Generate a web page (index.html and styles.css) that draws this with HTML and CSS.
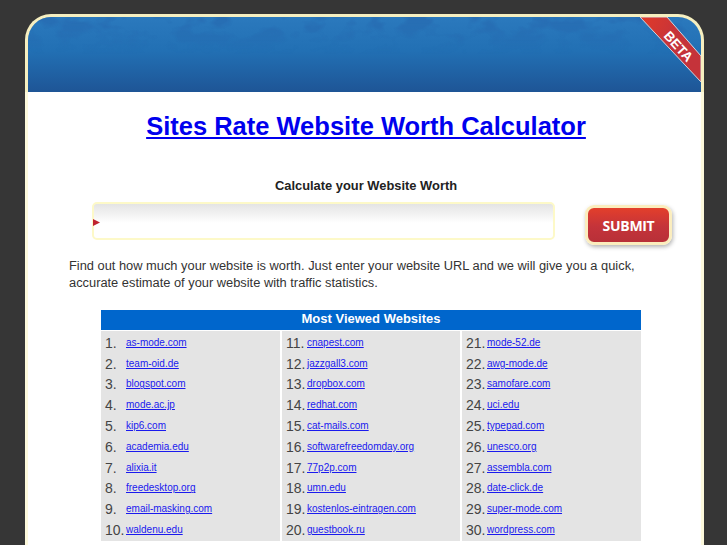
FILE: index.html

```html
<!DOCTYPE html>
<html lang="en">
<head>
    <meta charset="UTF-8">
    <title>Sites Rate Website Worth Calculator</title>
    <link rel="stylesheet" href="styles.css">
</head>
<body>
    <div class="container">
        <!-- Header -->
        <div class="header">
            <svg class="header-grain" width="673" height="75">
                <defs>
                    <filter id="grain" x="0" y="0" width="100%" height="100%" color-interpolation-filters="sRGB">
                        <feTurbulence type="fractalNoise" baseFrequency="0.035 0.06" numOctaves="3" seed="7"/>
                        <feColorMatrix type="matrix" values="0 0 0 0 0.15  0 0 0 0 0.40  0 0 0 0 0.68  0 0 0 5 -2.3"/>
                    </filter>
                    <linearGradient id="grain-fade" x1="0" y1="0" x2="0" y2="1">
                        <stop offset="0" stop-color="#fff"/>
                        <stop offset="0.5" stop-color="#000"/>
                    </linearGradient>
                    <mask id="grain-mask"><rect width="673" height="75" fill="url(#grain-fade)"/></mask>
                </defs>
                <g mask="url(#grain-mask)" opacity="0.6"><rect width="673" height="75" filter="url(#grain)"/></g>
            </svg>
            <svg class="beta" width="61" height="66" viewBox="0 0 61 66">
                <defs>
                    <linearGradient id="ribbon" x1="0" y1="0" x2="1" y2="0.6">
                        <stop offset="0" stop-color="#e23a28"/>
                        <stop offset="0.55" stop-color="#c5333a"/>
                    </linearGradient>
                </defs>
                <polygon points="0,0 27,0 61,39 61,65" fill="url(#ribbon)" stroke="#cfd6e0" stroke-width="1"/>
                <text transform="translate(35 32.5) rotate(48)" text-anchor="middle" class="beta-text">BETA</text>
            </svg>
        </div>

        <div class="content">
            <h1 class="title"><a href="#">Sites Rate Website Worth Calculator</a></h1>

            <form class="calc-form">
                <label class="calc-label" for="url">Calculate your Website Worth</label>
                <div class="calc-row">
                    <div class="url-box">
                        <svg class="url-arrow" width="7" height="7" viewBox="0 0 7 7"><polygon points="0,0 7,3.5 0,7" fill="#c0242f"/></svg>
                        <input type="text" id="url" class="url-input">
                    </div>
                    <button type="button" class="submit-button">SUBMIT</button>
                </div>
            </form>

            <p class="intro">Find out how much your website is worth. Just enter your website URL and we will give you a quick, accurate estimate of your website with traffic statistics.</p>

            <!-- Most viewed -->
            <div class="viewed">
                <div class="viewed-title">Most Viewed Websites</div>
                <div class="viewed-columns">
                    <ol class="site-list">
                        <li><span>1.</span><a href="#">as-mode.com</a></li>
                        <li><span>2.</span><a href="#">team-oid.de</a></li>
                        <li><span>3.</span><a href="#">blogspot.com</a></li>
                        <li><span>4.</span><a href="#">mode.ac.jp</a></li>
                        <li><span>5.</span><a href="#">kip6.com</a></li>
                        <li><span>6.</span><a href="#">academia.edu</a></li>
                        <li><span>7.</span><a href="#">alixia.it</a></li>
                        <li><span>8.</span><a href="#">freedesktop.org</a></li>
                        <li><span>9.</span><a href="#">email-masking.com</a></li>
                        <li><span>10.</span><a href="#">waldenu.edu</a></li>
                    </ol>
                    <ol class="site-list">
                        <li><span>11.</span><a href="#">cnapest.com</a></li>
                        <li><span>12.</span><a href="#">jazzgall3.com</a></li>
                        <li><span>13.</span><a href="#">dropbox.com</a></li>
                        <li><span>14.</span><a href="#">redhat.com</a></li>
                        <li><span>15.</span><a href="#">cat-mails.com</a></li>
                        <li><span>16.</span><a href="#">softwarefreedomday.org</a></li>
                        <li><span>17.</span><a href="#">77p2p.com</a></li>
                        <li><span>18.</span><a href="#">umn.edu</a></li>
                        <li><span>19.</span><a href="#">kostenlos-eintragen.com</a></li>
                        <li><span>20.</span><a href="#">guestbook.ru</a></li>
                    </ol>
                    <ol class="site-list">
                        <li><span>21.</span><a href="#">mode-52.de</a></li>
                        <li><span>22.</span><a href="#">awg-mode.de</a></li>
                        <li><span>23.</span><a href="#">samofare.com</a></li>
                        <li><span>24.</span><a href="#">uci.edu</a></li>
                        <li><span>25.</span><a href="#">typepad.com</a></li>
                        <li><span>26.</span><a href="#">unesco.org</a></li>
                        <li><span>27.</span><a href="#">assembla.com</a></li>
                        <li><span>28.</span><a href="#">date-click.de</a></li>
                        <li><span>29.</span><a href="#">super-mode.com</a></li>
                        <li><span>30.</span><a href="#">wordpress.com</a></li>
                    </ol>
                </div>
            </div>
        </div>
    </div>
</body>
</html>
```

FILE: styles.css

```css
/* General Styles */
html, body {
    height: 545px;
    overflow: hidden;
}

body {
    margin: 0;
    padding: 14px 0 0 25px;
    box-sizing: border-box;
    background-color: #363636;
    font-family: 'Liberation Sans', Arial, sans-serif;
}

.container {
    width: 679px;
    height: 531px;
    box-sizing: border-box;
    padding: 3px 3px 0;
    background: linear-gradient(#f6efc0 78px, #fdf9dc 78px);
    border-radius: 26px 26px 0 0;
}

/* Header */
.header {
    position: relative;
    height: 75px;
    overflow: hidden;
    border-radius: 23px 23px 0 0;
    background: linear-gradient(#2b79bd, #2270b4 45%, #1e5596);
}

.header-grain {
    position: absolute;
    top: 0;
    left: 0;
}

.beta {
    position: absolute;
    top: 0;
    right: 0;
}

.beta-text {
    font-size: 13.5px;
    font-weight: 700;
    fill: #ffffff;
}

.content {
    height: 453px;
    overflow: hidden;
    background-color: #ffffff;
}

/* Title */
.title {
    margin: 0;
    padding: 18px 0 0 3px;
    text-align: center;
    font-size: 25.5px;
    font-weight: 700;
    line-height: 32px;
}

.title a {
    color: #0000ee;
}

/* Form */
.calc-form {
    margin-top: 36px;
}

.calc-label {
    display: block;
    padding-left: 3px;
    text-align: center;
    font-size: 12.9px;
    font-weight: 700;
    line-height: 16px;
    color: #222222;
}

.calc-row {
    display: flex;
    align-items: flex-start;
    margin-top: 8px;
    padding-left: 64px;
}

.url-box {
    position: relative;
    width: 463px;
    height: 38px;
    box-sizing: border-box;
    border: 2px solid #fdf9c8;
    border-radius: 5px;
    background: linear-gradient(#e4e4e4, #f7f7f7 40%, #ffffff 55%);
}

.url-arrow {
    position: absolute;
    left: -1px;
    top: 15px;
}

.url-input {
    width: 100%;
    height: 100%;
    box-sizing: border-box;
    border: none;
    padding: 0 10px;
    background: transparent;
}

.submit-button {
    width: 87px;
    height: 40px;
    margin: 3px 0 0 30px;
    padding: 0;
    border: 3px solid #fbedbe;
    border-radius: 9px;
    background: linear-gradient(#e33f2b, #c4333a 55%, #b83038);
    color: #ffffff;
    font-family: 'Open Sans', sans-serif;
    font-size: 14px;
    font-weight: 700;
    letter-spacing: -0.3px;
    box-shadow: 1px 2px 4px rgba(0, 0, 0, 0.3);
}

/* Intro */
.intro {
    margin: 12px 50px 0 41px;
    font-size: 12.85px;
    line-height: 17px;
    color: #333333;
}

/* Most Viewed */
.viewed {
    width: 540px;
    margin: 19px 0 0 73px;
}

.viewed-title {
    height: 20px;
    background-color: #0066cc;
    color: #ffffff;
    text-align: center;
    font-size: 13px;
    font-weight: 700;
    line-height: 18px;
}

.viewed-columns {
    display: grid;
    grid-template-columns: 179px 178px 179px;
    gap: 2px;
    margin-top: 1px;
}

.site-list {
    margin: 0;
    padding: 1px 0 1px 4px;
    list-style: none;
    background-color: #e4e4e4;
}

.site-list li {
    display: flex;
    align-items: center;
    height: 20.8px;
}

.site-list span {
    width: 21px;
    margin-top: 1px;
    font-size: 14px;
    color: #444444;
}

.site-list a {
    font-size: 10px;
    color: #1a1aee;
}
```
